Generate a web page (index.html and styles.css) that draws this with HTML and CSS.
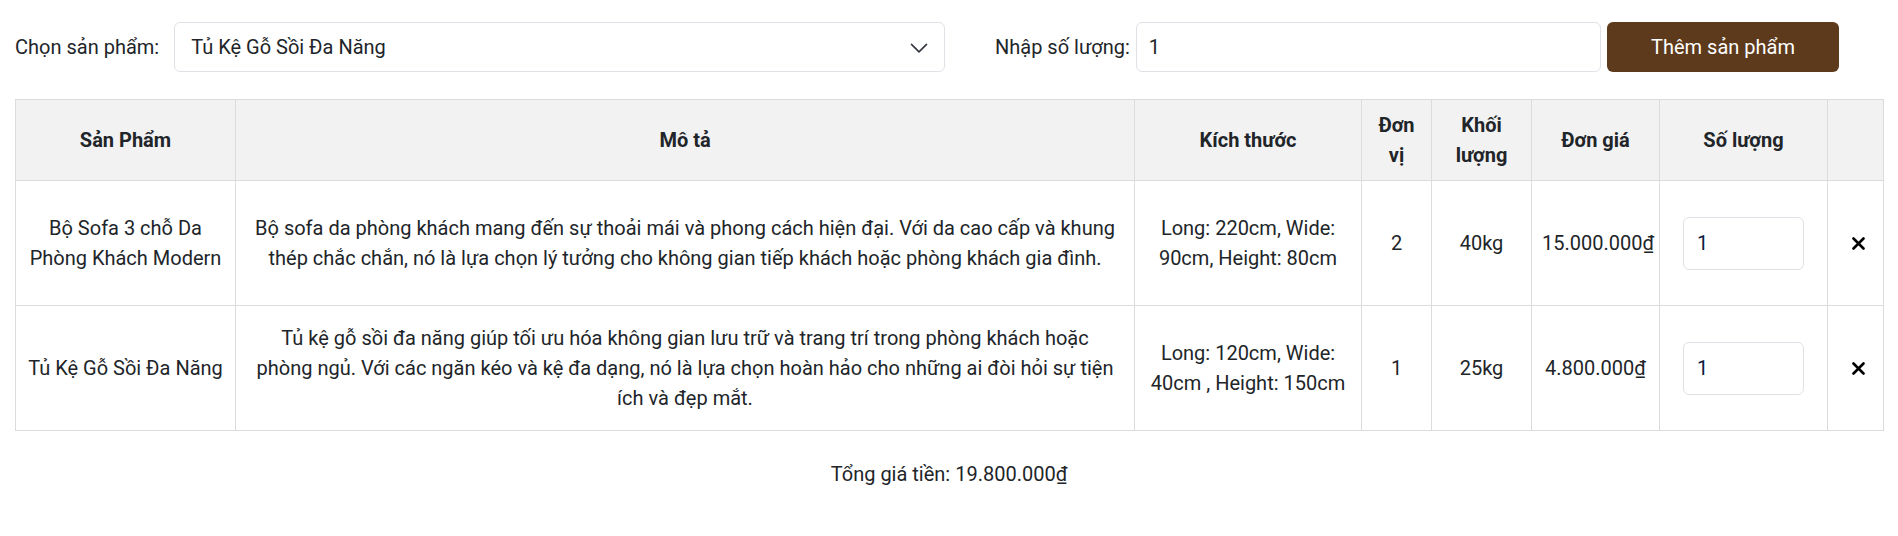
FILE: index.html
```html
<!DOCTYPE html>
<html lang="vi">
<head>
<meta charset="utf-8">
<title>Giỏ hàng</title>
<link rel="stylesheet" href="styles.css">
</head>
<body>
<div class="page">
  <div class="toolbar">
    <div class="group group-product">
      <label class="label">Chọn sản phẩm:</label>
      <div class="select-box">
        <span class="select-text">Tủ Kệ Gỗ Sồi Đa Năng</span>
        <svg class="chevron" width="20" height="15" viewBox="0 0 16 12"><path d="M2 3.5l6 6 6-6" fill="none" stroke="#343a40" stroke-width="1.3" stroke-linecap="round" stroke-linejoin="round"/></svg>
      </div>
    </div>
    <div class="group group-qty">
      <label class="label label-qty">Nhập số lượng:</label>
      <div class="text-input">1</div>
      <button class="btn-add">Thêm sản phẩm</button>
    </div>
  </div>

  <table class="cart">
    <colgroup>
      <col class="c-name"><col class="c-desc"><col class="c-size"><col class="c-unit"><col class="c-weight"><col class="c-price"><col class="c-qty"><col class="c-del">
    </colgroup>
    <thead>
      <tr>
        <th>Sản Phẩm</th>
        <th>Mô tả</th>
        <th>Kích thước</th>
        <th>Đơn vị</th>
        <th>Khối lượng</th>
        <th>Đơn giá</th>
        <th>Số lượng</th>
        <th></th>
      </tr>
    </thead>
    <tbody>
      <tr>
        <td>Bộ Sofa 3 chỗ Da Phòng Khách Modern</td>
        <td class="desc">Bộ sofa da phòng khách mang đến sự thoải mái và phong cách hiện đại. Với da cao cấp và khung thép chắc chắn, nó là lựa chọn lý tưởng cho không gian tiếp khách hoặc phòng khách gia đình.</td>
        <td>Long: 220cm, Wide: 90cm, Height: 80cm</td>
        <td>2</td>
        <td>40kg</td>
        <td>15.000.000₫</td>
        <td><div class="qty-input">1</div></td>
        <td><svg class="del" width="13" height="13" viewBox="0 0 13 13"><path d="M1.5 1.5l10 10M11.5 1.5l-10 10" stroke="#000" stroke-width="2.6" stroke-linecap="round"/></svg></td>
      </tr>
      <tr>
        <td>Tủ Kệ Gỗ Sồi Đa Năng</td>
        <td class="desc">Tủ kệ gỗ sồi đa năng giúp tối ưu hóa không gian lưu trữ và trang trí trong phòng khách hoặc phòng ngủ. Với các ngăn kéo và kệ đa dạng, nó là lựa chọn hoàn hảo cho những ai đòi hỏi sự tiện ích và đẹp mắt.</td>
        <td>Long: 120cm, Wide: 40cm , Height: 150cm</td>
        <td>1</td>
        <td>25kg</td>
        <td>4.800.000₫</td>
        <td><div class="qty-input">1</div></td>
        <td><svg class="del" width="13" height="13" viewBox="0 0 13 13"><path d="M1.5 1.5l10 10M11.5 1.5l-10 10" stroke="#000" stroke-width="2.6" stroke-linecap="round"/></svg></td>
      </tr>
    </tbody>
  </table>

  <p class="total">Tổng giá tiền: 19.800.000₫</p>
</div>
</body>
</html>
```
FILE: styles.css
```css
* { box-sizing: border-box; }
html, body { margin: 0; background: #fff; }
body {
  font-family: Roboto, "Liberation Sans", sans-serif;
  font-size: 20px;
  line-height: 30px;
  color: #212529;
}
.page { padding: 22px 15px 0; }

.toolbar {
  display: flex;
  align-items: center;
  padding-right: 44px;
}
.group { display: flex; align-items: center; }
.group-product { width: 930px; flex: none; }
.group-qty { flex: 1; margin-left: 50px; }
.label { white-space: nowrap; margin-right: 15px; }
.label-qty { margin-right: 6px; }

.select-box {
  flex: 1;
  height: 50px;
  border: 1px solid #dee2e6;
  border-radius: 6px;
  display: flex;
  align-items: center;
  justify-content: space-between;
  padding: 0 15px 0 16px;
}
.chevron { display: block; }

.text-input {
  flex: 1;
  height: 50px;
  border: 1px solid #dee2e6;
  border-radius: 6px;
  padding: 0 12px;
  display: flex;
  align-items: center;
}
.btn-add {
  flex: none;
  width: 232px;
  height: 50px;
  margin-left: 6px;
  background: #5d3a1b;
  color: #fff;
  border: 0;
  border-radius: 6px;
  font: inherit;
  font-size: 20px;
}

.cart {
  width: 100%;
  margin-top: 27px;
  border-collapse: collapse;
  table-layout: fixed;
}
.c-name { width: 220px; }
.c-desc { width: 899px; }
.c-size { width: 227px; }
.c-unit { width: 70px; }
.c-weight { width: 100px; }
.c-price { width: 128px; }
.c-qty { width: 168px; }
.c-del { width: 56px; }

.cart th, .cart td {
  border: 1px solid #dcdcdc;
  padding: 10px;
  text-align: center;
  vertical-align: middle;
}
.cart td.desc { padding: 10px 15px; }
.cart th {
  background: #f2f2f2;
  font-weight: 700;
  height: 81px;
}
.cart tbody tr { height: 125px; }

.qty-input {
  display: flex;
  align-items: center;
  width: 121px;
  height: 53px;
  margin: 0 auto;
  border: 1px solid #dee2e6;
  border-radius: 6px;
  padding: 0 13px;
  text-align: left;
  color: #0b1a3f;
}
.del { display: block; margin: 0 auto; position: relative; left: 3px; }

.total {
  margin: 28px 0 0;
  text-align: center;
}
```
